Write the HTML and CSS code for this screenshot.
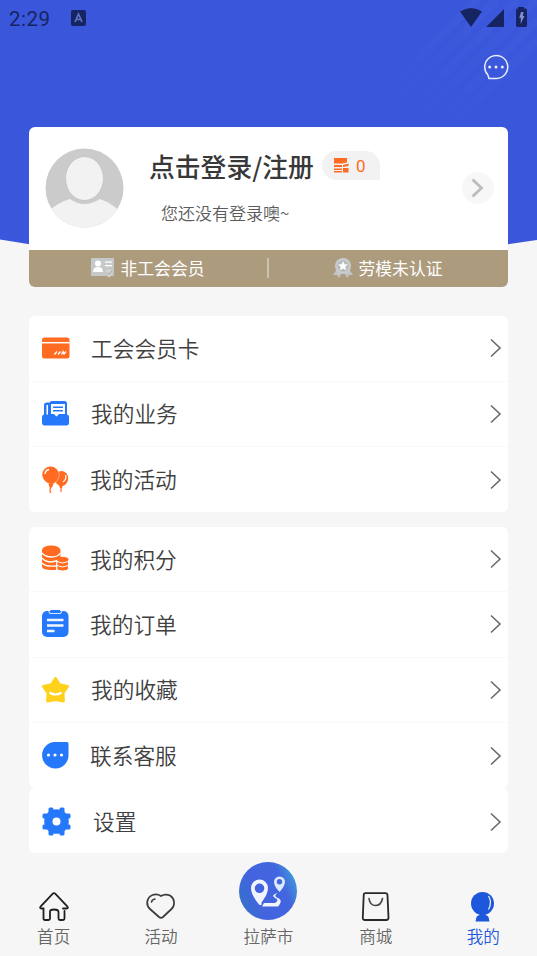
FILE: index.html
```html
<!DOCTYPE html>
<html lang="zh-CN">
<head>
<meta charset="utf-8">
<title>我的</title>
<link rel="stylesheet" href="styles.css">
</head>
<body>
<div class="screen">
  <svg class="backdrop" width="537" height="250" viewBox="0 0 537 250">
    <defs><linearGradient id="fade" x1="0" y1="1" x2="1" y2="0"><stop offset="0.1" stop-color="#fff" stop-opacity="0"/><stop offset="1" stop-color="#fff" stop-opacity="0.02"/></linearGradient></defs>
    <path d="M0 0H537V240Q508 244 480 249H57Q29 244 0 239.500Z" fill="#3a57dc"/>
    <path d="M370 127L497 0M390 127L517 0M410 127L537 0M430 127L537 20M350 127L477 0M450 127L537 40" stroke="url(#fade)" stroke-width="8"/>
  </svg>
  <header class="status">
    <span class="clock">2:29</span>
    <svg class="app" width="15" height="16" viewBox="0 0 15 16"><rect width="15" height="16" rx="2" fill="#172462"/><path d="M4 12L7.500 4L11 12M5.500 9.500H9.500" fill="none" stroke="#5f72c4" stroke-width="1.700"/></svg>
    <svg class="signals" width="68" height="21" viewBox="0 0 68 21" fill="#172462"><path d="M0 4.500Q11 -2.500 22 4.500L11 20Z"/><path d="M44 2V20H26Z"/><path d="M58 1.500V0H64V1.500H65.500Q67 1.500 67 3V18.500Q67 20 65.500 20H57.500Q56 20 56 18.500V3Q56 1.500 57.500 1.500Z"/><path d="M61 5H63.500L62.800 9H64.500L60.500 17L61 11H59.300Z" fill="#8290cf"/></svg>
  </header>
  <div class="toolbar">
    <svg width="26" height="26" viewBox="0 0 26 26"><path d="M6 24.500H13.500A11.500 11.500 0 1 0 4.800 20.800Z" fill="none" stroke="#e8edff" stroke-width="1.500" stroke-linejoin="round"/><g fill="#e8edff"><circle cx="6.700" cy="13" r="1.500"/><circle cx="13" cy="13" r="1.500"/><circle cx="19.300" cy="13" r="1.500"/></g></svg>
  </div>
  <section class="profile">
    <div class="user">
      <svg class="avatar" width="79" height="80" viewBox="0 0 79 80"><defs><clipPath id="face"><ellipse cx="39.500" cy="40" rx="39" ry="39.500"/></clipPath></defs><g clip-path="url(#face)"><rect width="79" height="80" fill="#cbcbcb"/><path d="M0 66Q13 54 25 51Q39 61 55 51Q67 55 79 67V80H0Z" fill="#f2f2f2"/><ellipse cx="39.500" cy="30.500" rx="19" ry="22" fill="#f2f2f2" stroke="#c5c5c5" stroke-width="1"/></g></svg>
      <div class="who">
        <div class="login"><span class="title">点击登录/注册</span>
          <span class="points"><svg width="15" height="15" viewBox="0 0 15 15"><path d="M0 0H13V4.500L8 5.500H0ZM0 7H8V9H0ZM0 10.500H8V12H0ZM0 13H8V14.500H0ZM9 7L14.500 5.500V8L9 9ZM9 10H14.500V14.500H9Z" fill="#ff6b22"/></svg>0</span>
        </div>
        <div class="hint">您还没有登录噢~</div>
      </div>
      <span class="go"><svg width="14" height="20" viewBox="0 0 14 20"><path d="M1.500 1.500L10.500 10L1.500 18.500" fill="none" stroke="#bcbcbc" stroke-width="2.800"/></svg></span>
    </div>
    <div class="badges">
      <div class="badge"><svg width="24" height="20" viewBox="0 0 24 20"><rect width="23" height="18" rx="1" fill="#c6c9ca"/><circle cx="7" cy="5.500" r="3" fill="#fff"/><path d="M2 14Q2 9 7 9T12 14ZM14 3.500H21V4.700H14ZM14 7H21V8.200H14Z" fill="#fff"/><path d="M13.500 12L18 10.500L22.500 12Q23 17 18 19.500Q14 17 13.500 12Z" fill="#d2d5d5" stroke="#b8b5ac" stroke-width=".6"/><path d="M16 14.500L18 16.500L21 13" fill="none" stroke="#a8a294"/></svg><span>非工会会员</span></div>
      <div class="badge second"><svg width="20" height="20" viewBox="0 0 20 20"><path d="M4 11L0 17L4 17L6 20L9 14ZM16 11L20 17L16 17L14 20L11 14Z" fill="#c3c5c5"/><circle cx="10" cy="8" r="8" fill="#c9cccc"/><circle cx="10" cy="8" r="5.800" fill="#b8bbbc"/><path d="M10 3L11.400 6.200L15 6.500L12.300 8.800L13.200 12.300L10 10.500L6.800 12.300L7.700 8.800L5 6.500L8.600 6.200Z" fill="#fff"/></svg><span>劳模未认证</span></div>
    </div>
  </section>
  <nav class="menu first">
    <a class="row"><svg class="icon" width="28" height="28" viewBox="0 0 28 28"><rect y="3.500" width="27.500" height="21" rx="2.500" fill="#ff6b20"/><path d="M0 8.700H27.500" stroke="#fff" stroke-width="1.500"/><path d="M12.500 20.500L15 17.500M16 20.500L18.500 17.500M19.500 20.500L21 17.500L22 20L24 17.500" stroke="#fff" stroke-width="1.300" fill="none"/></svg><span>工会会员卡</span><svg class="arrow" width="12" height="20" viewBox="0 0 12 20"><path d="M1 1.500L10 10L1 18.500"/></svg></a>
    <a class="row"><svg class="icon" width="28" height="28" viewBox="0 0 28 28" fill="#2678fa"><path d="M2 16V5Q2 2.500 5 2.500H9V17Z"/><rect x="7.500" y="1" width="17.500" height="19" rx="2.500"/><rect x="4.500" y="5" width="1.500" height="10" fill="#fff"/><path d="M9 4H23V14H17L14.500 16.500L12 14H9Z" fill="#fff"/><path d="M11 6.500H21V8H11ZM11 10H21V11.500H11Z"/><path d="M2 14.500H8.500Q9.500 18 14 18T18.500 14.500H25Q27 14.500 27 17V22.500Q27 25.500 24.500 25.500H2.500Q0 25.500 0 22.500V17Q0 14.500 2 14.500Z"/></svg><span>我的业务</span><svg class="arrow" width="12" height="20" viewBox="0 0 12 20"><path d="M1 1.500L10 10L1 18.500"/></svg></a>
    <a class="row act"><svg class="icon" width="28" height="28" viewBox="0 0 28 28" fill="#ff6b20"><ellipse cx="19.500" cy="12.500" rx="6.700" ry="7.500"/><path d="M17 18.500H21L20 22H18Z"/><path d="M19 21V26" stroke="#ff6b20" stroke-width="1.200"/><path d="M23.500 9Q25 13 21 16" fill="none" stroke="#fff" stroke-width="1.200"/><path d="M8.500 .200A8.500 8.800 0 0 1 17.200 9Q16.500 15.500 9.500 19Q.500 15.500 0 9A8.500 8.800 0 0 1 8.500 .200Z" stroke="#fff" stroke-width=".4"/><path d="M6.500 18H11.500L10 21.500H7.500Z"/><path d="M8.700 21Q7.500 23.500 8.500 27" fill="none" stroke="#ff6b20" stroke-width="1.300"/><path d="M3 8Q3.500 4 7 3.500" fill="none" stroke="#fff" stroke-width="1.300"/></svg><span>我的活动</span><svg class="arrow" width="12" height="20" viewBox="0 0 12 20"><path d="M1 1.500L10 10L1 18.500"/></svg></a>
  </nav>
  <nav class="menu rest">
    <a class="row act"><svg class="icon" width="28" height="28" viewBox="0 0 28 28"><path d="M0 5V22Q1 25 9 25H14V15H18.500V5Z" fill="#ff6b20"/><ellipse cx="9.200" cy="5" rx="9.200" ry="4.500" fill="#ff6b20"/><path d="M0 8Q3 12 9.500 12T18.500 8M0 13Q3 17 9.500 17L16 15.500M0 18Q3 22 14 21" fill="none" stroke="#fff" stroke-width="1.300"/><path d="M14.800 15V24Q16 26 20.500 26T26.500 24V14Z" fill="#ff6b20" stroke="#fff" stroke-width="1"/><ellipse cx="20.700" cy="14.500" rx="5.800" ry="2.700" fill="#ff6b20"/><path d="M15 16.500Q20 19.500 26.500 16.500M15 20.500Q20 23.500 26.500 20.500" fill="none" stroke="#fff"/></svg><span>我的积分</span><svg class="arrow" width="12" height="20" viewBox="0 0 12 20"><path d="M1 1.500L10 10L1 18.500"/></svg></a>
    <a class="row act"><svg class="icon" width="28" height="28" viewBox="0 0 28 28"><rect y="1" width="26.500" height="26" rx="5" fill="#2678fa"/><path d="M6.500 1L8 3.500H18.500L20 1" fill="none" stroke="#d6e6ff" stroke-width="1.100"/><path d="M8.500 0H18V2H8.500Z" fill="#2678fa"/><path d="M5 10H21.500M5 15.500H21.500M5 21H12.500" stroke="#f2f7ff" stroke-width="2.400"/></svg><span>我的订单</span><svg class="arrow" width="12" height="20" viewBox="0 0 12 20"><path d="M1 1.500L10 10L1 18.500"/></svg></a>
    <a class="row"><svg class="icon" width="28" height="28" viewBox="0 0 28 28"><path d="M13.500 2.500L17.500 8.700L25.500 10.500L21 17L21.400 25L13.500 23.500L5.600 25L6 17L1.500 10.500L9.500 8.700Z" fill="#ffd11d" stroke="#ffd11d" stroke-width="3" stroke-linejoin="round"/><path d="M7.500 16.500Q13.500 20.500 19.500 16.500" fill="none" stroke="#fff" stroke-width="2.200"/></svg><span>我的收藏</span><svg class="arrow" width="12" height="20" viewBox="0 0 12 20"><path d="M1 1.500L10 10L1 18.500"/></svg></a>
    <a class="row act"><svg class="icon" width="28" height="28" viewBox="0 0 28 28"><path d="M13 0H25Q26.500 0 26.500 1.500V13A13.200 13.200 0 1 1 13 0Z" fill="#2678fa"/><g fill="#fff"><circle cx="6.500" cy="13" r="1.600"/><circle cx="13" cy="13" r="1.600"/><circle cx="19.500" cy="13" r="1.600"/></g></svg><span>联系客服</span><svg class="arrow" width="12" height="20" viewBox="0 0 12 20"><path d="M1 1.500L10 10L1 18.500"/></svg></a>
  </nav>
  <nav class="menu last">
    <a class="row settings"><svg class="icon" width="29" height="29" viewBox="0 0 29 29"><g fill="#2678fa"><circle cx="14.500" cy="14.500" r="12.300"/><rect x="6.500" y=".5" width="5" height="28" rx="1.500"/><rect x="17.500" y=".5" width="5" height="28" rx="1.500"/><rect x=".5" y="6.500" width="28" height="5" rx="1.500"/><rect x=".5" y="17.500" width="28" height="5" rx="1.500"/></g><circle cx="14.500" cy="14.500" r="4" fill="#fff"/></svg><span>设置</span><svg class="arrow" width="12" height="20" viewBox="0 0 12 20"><path d="M1 1.500L10 10L1 18.500"/></svg></a>
  </nav>
  <footer class="tabs">
    <a class="tab"><svg width="30" height="30" viewBox="0 0 30 30"><path d="M25.500 19V26.500Q25.500 28 24 28H21Q19.500 28 19.500 26.500V20Q19.500 17.500 15 17.500T11 20V26.500Q11 28 9.500 28H6Q4.500 28 4.500 26.500V16.500H2.500Q0 16.500 2 14.200L13.800 1.700Q15 .5 16.200 1.700L28 14.200Q30 16.500 27.500 16.500H24" fill="none" stroke="#202020" stroke-width="1.800" stroke-linecap="round"/></svg><span>首页</span></a>
    <a class="tab"><svg width="30" height="30" viewBox="0 0 30 30"><path d="M15 4Q19 1.500 24 3.500Q28.500 6.500 28 12Q28 14.500 25.500 17L17 25Q15 26.500 13 25L4 17Q1 14 1.200 10.500Q2 4.500 6.500 3Q11 1.500 15 4Z" fill="none" stroke="#3c3c3c" stroke-width="1.800"/><path d="M5.500 10Q6 7.500 9 7" fill="none" stroke="#3c3c3c" stroke-width="1.500" stroke-linecap="round"/></svg><span>活动</span></a>
    <a class="tab city"><svg width="58" height="58" viewBox="0 0 58 58"><defs><linearGradient id="disc" x1="0" y1=".7" x2="1" y2=".3"><stop stop-color="#3571c9"/><stop offset=".3" stop-color="#4264de"/><stop offset=".75" stop-color="#4365df"/><stop offset="1" stop-color="#3e9bda"/></linearGradient></defs><circle cx="29" cy="29" r="29" fill="url(#disc)"/><path fill-rule="evenodd" fill="#f0f4ff" d="M20.500 17.500A8.500 8.500 0 0 1 29 26Q29 32 22.500 40.500V43H20.500Q12 33 12 26A8.500 8.500 0 0 1 20.500 17.500ZM20.500 21.500A4.800 4.800 0 1 0 20.500 31.100A4.800 4.800 0 1 0 20.500 21.500Z"/><path fill-rule="evenodd" fill="#dfe9ff" d="M40.500 14.500A5.500 5.500 0 0 1 46 20Q46 24 40.500 30Q35 24 35 20A5.500 5.500 0 0 1 40.500 14.500ZM40.500 17A2.700 2.700 0 1 0 40.500 22.400A2.700 2.700 0 1 0 40.500 17Z"/><path d="M25 41H36Q41 38 36 36Q31 33 39 31Q33 34 40 36.500Q44 39 39 44.500H23Z" fill="#f0f4ff"/></svg><span>拉萨市</span></a>
    <a class="tab"><svg width="30" height="30" viewBox="0 0 30 30"><path d="M4.500 1.200H24.500Q26.300 1.200 26.500 3.500L27.500 25.500Q27.500 28 25.300 28H4Q1.700 28 1.800 25.500L2.700 3.500Q2.700 1.200 4.500 1.200Z" fill="none" stroke="#282828" stroke-width="1.800"/><path d="M8 6.500Q9 13.500 14.500 13.500T21.500 6.500" fill="none" stroke="#4a4a4a" stroke-width="1.700" stroke-linecap="round"/></svg><span>商城</span></a>
    <a class="tab active"><svg width="30" height="30" viewBox="0 0 30 30"><circle cx="14.500" cy="11.500" r="11.500" fill="#1d57db"/><path d="M20.500 4Q24.500 10 20.500 17.500" fill="none" stroke="#f6f6f6" stroke-width="1.200"/><path d="M8.500 25Q10 22.500 14.500 22.500T20.500 25L21.500 29.500H7.500Z" fill="#1d57db"/></svg><span>我的</span></a>
  </footer>
</div>
</body>
</html>
```
FILE: styles.css
```css
* { box-sizing: border-box; }
body { margin: 0; background: #f6f6f6; font-family: "Noto Sans CJK SC", sans-serif; color: #3a3a3a; }
.screen { position: relative; width: 537px; height: 956px; overflow: hidden; display: flex; flex-direction: column; }
.backdrop { position: absolute; top: 0; left: 0; z-index: -1; }
svg { display: block; flex: none; }

.status { height: 38px; display: flex; align-items: flex-start; padding: 7px 9px 0; }
.clock { width: 62px; font: 400 20.5px/24px Roboto, sans-serif; letter-spacing: .5px; color: #172462; }
.app { margin-top: 3px; }
.signals { margin-left: auto; }
.toolbar { height: 89px; display: flex; justify-content: flex-end; padding: 16px 28px 0; }

.profile { margin: 0 29px; height: 160px; border-radius: 6px; overflow: hidden; background: #fff; flex: none; }
.user { height: 123px; display: flex; align-items: flex-start; padding: 21px 14px 0 16px; }
.who { margin-left: 25px; }
.login { display: flex; align-items: center; height: 36px; }
.title { font-size: 25.8px; line-height: 36px; font-weight: 500; color: #383838; width: 173px; white-space: nowrap; margin-top: -1px; }
.points { width: 58px; height: 29px; margin-top: -1px; display: flex; align-items: center; gap: 7px; padding-left: 12px; border-radius: 15px 15px 2px 15px; background: #f2f2f2; color: #ff6b22; font: 17px Roboto, sans-serif; }
.hint { margin: 16px 0 0 12px; font-size: 17px; line-height: 25px; color: #5c5c5c; font-weight: 350; }
.go { width: 32px; height: 32px; margin: 24px 0 0 auto; border-radius: 50%; background: #f7f7f7; display: flex; align-items: center; justify-content: center; }
.badges { height: 37px; display: flex; background: #ad9b7e; color: #fff; font-size: 16.8px; }
.badge { flex: 1 1 0; display: flex; align-items: center; justify-content: center; gap: 6px; position: relative; padding: 0 3px 1px 0; }
.badge.second { padding-right: 2px; }
.badge.second::before { content: ""; position: absolute; left: -2px; top: 8px; width: 2px; height: 20px; background: #cbc2b2; }

.menu { margin: 0 29px; background: #fff; border-radius: 6px; flex: none; }
.first { margin-top: 29px; height: 196px; }
.rest { margin-top: 15px; height: 261px; }
.last { height: 65px; }
.row { display: flex; align-items: center; height: 65.6px; padding: 0 6px 0 13px; border-bottom: 1px solid #f9f9f9; font-size: 21.7px; line-height: 32px; color: #404040; font-weight: 350; }
.row:last-child { border-bottom: 0; }
.row span { margin: -1px 0 0 21px; }
.row.act span { margin-left: 20px; }
.row.settings span { margin-left: 22px; }
.rest .row { height: 65.3px; }
.row.settings { height: 65px; padding-top: 2px; }
.arrow { margin-left: auto; fill: none; stroke: #6a6a6a; stroke-width: 1.6; }

.tabs { flex: 1; display: flex; }
.tab { width: 107.4px; padding-top: 39px; display: flex; flex-direction: column; align-items: center; font-size: 16.6px; line-height: 24px; color: #666; font-weight: 350; }
.tab span { margin-top: 2px; }
.tab.city { padding-top: 9px; }
.tab.city span { margin-top: 4px; }
.tab.active { color: #2458dd; }
```
